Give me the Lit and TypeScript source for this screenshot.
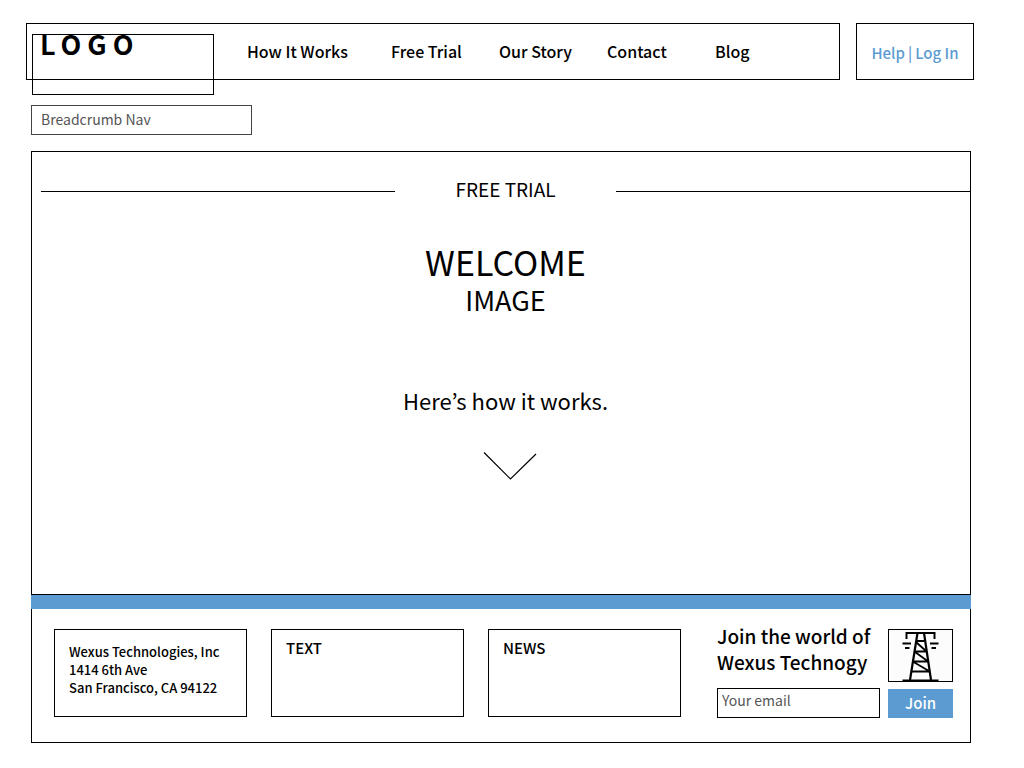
import { LitElement, html, css } from "lit";
import { customElement } from "lit/decorators.js";

@customElement("app-root")
export class AppRoot extends LitElement {
  static styles = css`
    :host {
      display: block;
      box-sizing: border-box;
      min-height: 100vh;
      padding: 23px 50px 25px 26px;
      background: #fff;
      color: #000;
      font-family: "Noto Sans CJK KR", "Noto Sans", sans-serif;
      font-size: 16px;
      line-height: 24px;
    }
    *, *::before, *::after { box-sizing: border-box; }
    h1, h2, p { margin: 0; font-weight: 400; }
    a { color: inherit; text-decoration: none; }
    .header { display: flex; gap: 16px; height: 57px; }
    .bar { position: relative; flex: 1; display: flex; align-items: center; padding: 0 0 2px 220px; border: 1px solid #000; }
    .logo {
      position: absolute; left: 5px; top: 10px; width: 182px; height: 61px;
      border: 1px solid #000; padding-left: 7px;
      font-size: 27px; line-height: 18px; font-weight: 700; letter-spacing: 6px;
    }
    .nav { display: grid; grid-template-columns: 144px repeat(4, 108px); font-weight: 500; white-space: nowrap; }
    .account {
      display: flex; align-items: center; justify-content: center; gap: 3px; width: 118px;
      padding-top: 2px;
      border: 1px solid #000; color: #5b9bd1; font-size: 15px; font-weight: 500; white-space: nowrap;
    }
    .page { margin: 25px 3px 0 5px; }
    .crumbs { width: 221px; height: 30px; padding-left: 9px; border: 1px solid #444; color: #555; font-size: 14px; line-height: 26px; }
    .hero { display: flex; flex-direction: column; align-items: center; margin-top: 16px; height: 444px; padding-left: 9px; border: 1px solid #000; text-align: center; }
    .heading { display: flex; align-items: center; align-self: stretch; margin-top: 24px; height: 30px; }
    .rule { flex: 1; height: 1px; background: #000; }
    .title { width: 221px; padding-bottom: 4px; font-size: 19px; line-height: 28px; }
    .welcome { margin-top: 36px; font-size: 34px; line-height: 40px; }
    .image { font-size: 27px; line-height: 36px; }
    .how { margin-top: 64px; font-size: 22px; line-height: 36px; }
    .chevron { display: block; width: 54px; height: 28px; margin-top: 34px; margin-left: 8px; }
    .stripe { height: 14px; background: #5b9bd1; }
    .footer {
      display: grid; grid-template-columns: 627fr 236fr; gap: 36px;
      padding: 20px 17px 24px 22px; border: 1px solid #000; border-top: 0;
    }
    .boxes { display: grid; grid-template-columns: repeat(3, 1fr); gap: 24px; }
    .box { height: 88px; border: 1px solid #000; padding: 6px 14px; font-size: 15px; font-weight: 500; }
    .address { padding-top: 13px; font-size: 13px; line-height: 18px; font-style: normal; white-space: nowrap; }
    .join { display: grid; grid-template-columns: 1fr 65px; grid-template-rows: 53px 30px; gap: 6px 8px; }
    .pitch { font-size: 19px; line-height: 26px; font-weight: 500; white-space: nowrap; margin-top: -6px; }
    .tower { border: 1px solid #000; background: #fcfcfc; display: flex; justify-content: center; }
    .tower svg { display: block; width: 63px; height: 51px; }
    .email {
      width: 100%; min-width: 0; height: 30px; margin: 0; padding: 0 4px 6px; border: 1px solid #000; border-radius: 0;
      background: #fff; color: #000; font: inherit; font-size: 14px;
    }
    .email::placeholder { color: #555; opacity: 1; }
    .submit { height: 29px; align-self: end; padding: 0 0 2px; border: 0; background: #5b9bd1; color: #fff; font: inherit; font-size: 15px; font-weight: 500; }
  `;

  private links = ["How It Works", "Free Trial", "Our Story", "Contact", "Blog"];

  render() {
    return html`
      <header class="header">
        <div class="bar">
          <a class="logo" href="#">LOGO</a>
          <nav class="nav">${this.links.map((l) => html`<a href="#">${l}</a>`)}</nav>
        </div>
        <div class="account"><a href="#">Help</a><span>|</span><a href="#">Log In</a></div>
      </header>
      <div class="page">
        <nav class="crumbs">Breadcrumb Nav</nav>
        <main class="hero">
          <div class="heading">
            <span class="rule"></span><h1 class="title">FREE TRIAL</h1><span class="rule"></span>
          </div>
          <h2 class="welcome">WELCOME</h2>
          <p class="image">IMAGE</p>
          <p class="how">Here’s how it works.</p>
          <svg class="chevron" viewBox="0 0 54 28" fill="none" stroke="#000" stroke-width="1.2" aria-hidden="true">
            <path d="M1 .5 27.5 27 53 2" />
          </svg>
        </main>
        <div class="stripe"></div>
        <footer class="footer">
          <div class="boxes">
            <address class="box address">Wexus Technologies, Inc<br />1414 6th Ave<br />San Francisco, CA 94122</address>
            <section class="box">TEXT</section>
            <section class="box">NEWS</section>
          </div>
          <form class="join" @submit=${(e: Event) => e.preventDefault()}>
            <label class="pitch" for="email">Join the world of<br />Wexus Technogy</label>
            <div class="tower">
              <svg viewBox="0 0 63 51" fill="none" stroke="#000" aria-hidden="true">
                <path stroke-width="2" d="M17.5 9V3H45.5V9" />
                <path stroke-width="2" d="M13.5 13.5H22M16 18H20.5M41 13.5H49.5M42.5 18H47" />
                <path stroke-width="2.2" d="M28.5 3 21 50M35 3 42 50" />
                <path stroke-width="1.6" d="M13.5 50.2H49.5" />
                <path stroke-width="1.8" d="M27.5 11H35.5M26 21.5H37.5M24.5 31.5H39M22.5 41.500H40.5M27.5 12.5 37 21M26 22 38.5 31M24.5 32 40 41" />
              </svg>
            </div>
            <input class="email" id="email" type="email" placeholder="Your email" />
            <button class="submit" type="submit">Join</button>
          </form>
        </footer>
      </div>
    `;
  }
}
